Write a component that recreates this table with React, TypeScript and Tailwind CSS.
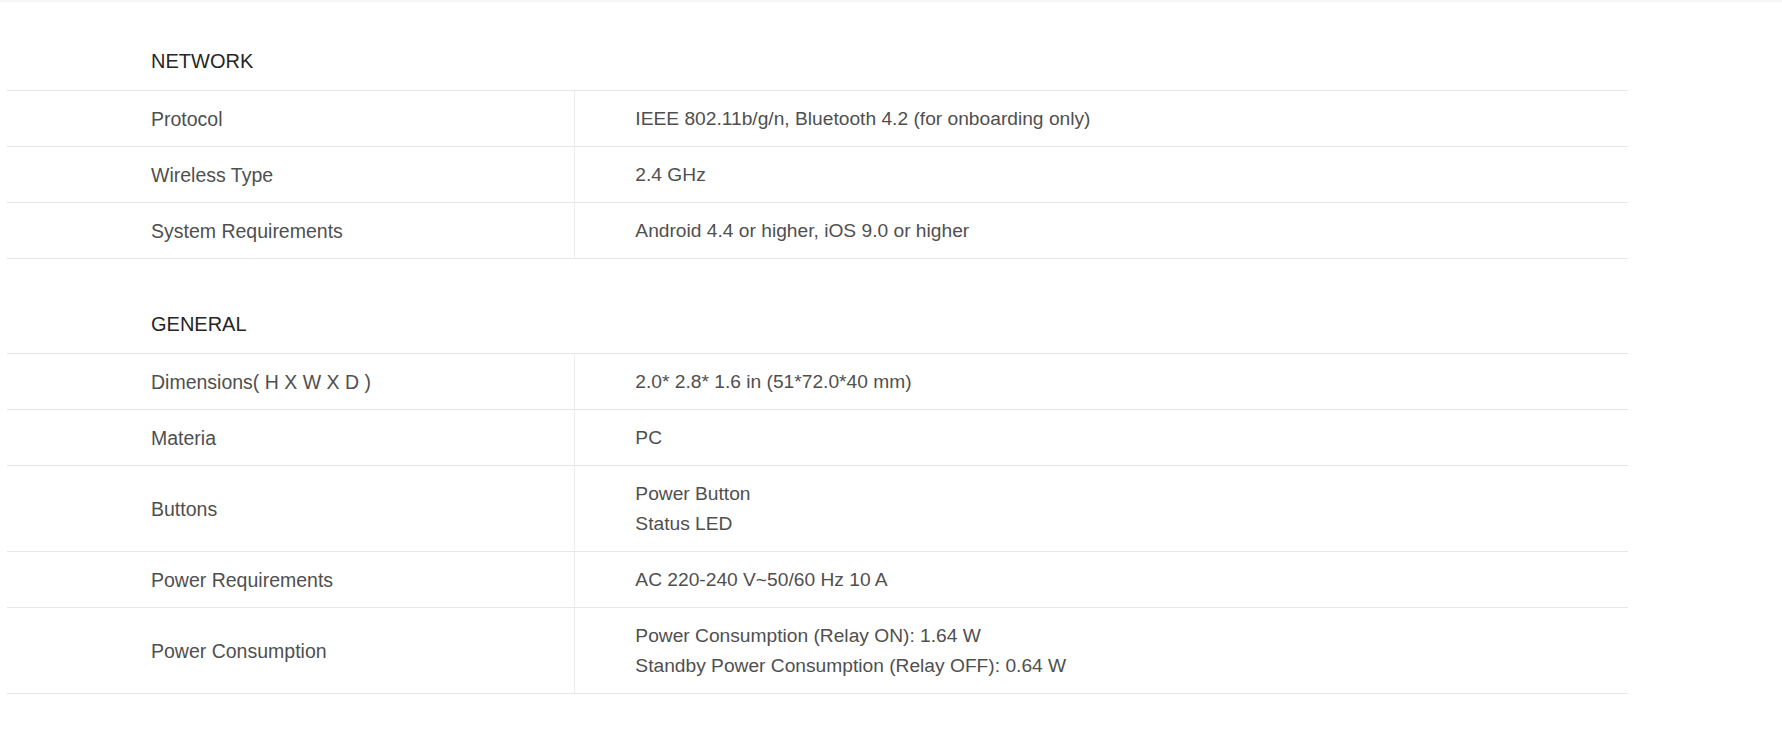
type Spec = { label: string; value: string[] };

const sections: { title: string; rows: Spec[] }[] = [
  {
    title: 'NETWORK',
    rows: [
      { label: 'Protocol', value: ['IEEE 802.11b/g/n, Bluetooth 4.2 (for onboarding only)'] },
      { label: 'Wireless Type', value: ['2.4 GHz'] },
      { label: 'System Requirements', value: ['Android 4.4 or higher, iOS 9.0 or higher'] },
    ],
  },
  {
    title: 'GENERAL',
    rows: [
      { label: 'Dimensions( H X W X D )', value: ['2.0* 2.8* 1.6 in (51*72.0*40 mm)'] },
      { label: 'Materia', value: ['PC'] },
      { label: 'Buttons', value: ['Power Button', 'Status LED'] },
      { label: 'Power Requirements', value: ['AC 220-240 V~50/60 Hz 10 A'] },
      {
        label: 'Power Consumption',
        value: ['Power Consumption (Relay ON): 1.64 W', 'Standby Power Consumption (Relay OFF): 0.64 W'],
      },
    ],
  },
];

function SpecRow({ row }: { row: Spec }) {
  return (
    <div className="flex border-b border-[#e6e6e6] leading-[30px]">
      <div className="w-[35%] flex items-center pl-[144px] pt-[13px] pb-[12px]">{row.label}</div>
      <div className="flex-1 border-l border-[#ececec] pl-[60px] pt-[13px] pb-[12px] text-[19.2px]">
        {row.value.map((line) => (
          <div key={line}>{line}</div>
        ))}
      </div>
    </div>
  );
}

export default function App() {
  return (
    <div
      className="min-h-screen bg-white border-t-2 border-[#f6f6f6] text-[#4f4f4f] text-[19.5px]"
      style={{ fontFamily: '"Liberation Sans", Arial, sans-serif' }}
    >
      <div className="ml-[7px] w-[1621px]">
        {sections.map((section, i) => (
          <section key={section.title} className={i === 0 ? 'pt-[44px]' : 'pt-[50px]'}>
            <h2 className="pl-[144px] pb-[14px] leading-[30px] text-[20px] text-[#262626] border-b border-[#e6e6e6]">
              {section.title}
            </h2>
            {section.rows.map((row) => (
              <SpecRow key={row.label} row={row} />
            ))}
          </section>
        ))}
      </div>
    </div>
  );
}
